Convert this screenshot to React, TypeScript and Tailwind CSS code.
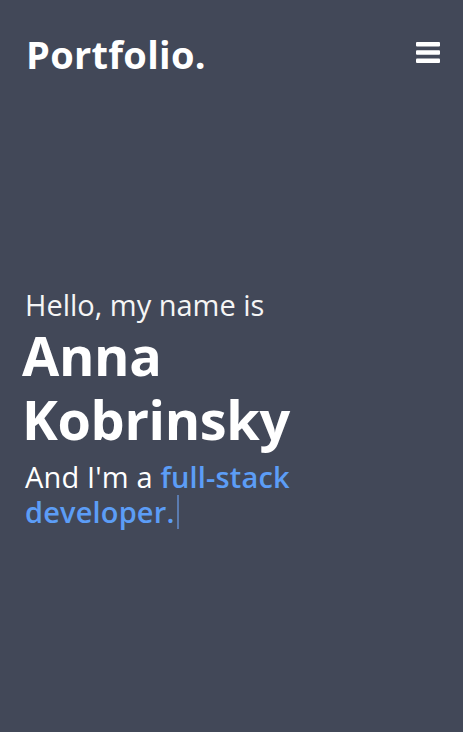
import React from "react";

export default function App() {
  return (
    <div
      className="min-h-[732px] w-full bg-[#424858] text-white"
      style={{ fontFamily: '"Open Sans", "Noto Sans", sans-serif' }}
    >
      <header className="flex items-start justify-between pl-[26px] pr-[23px] pt-[36px]">
        <div className="text-[38px] font-bold leading-[36px] tracking-[0.3px]">Portfolio.</div>
        <button className="mt-[6px]" aria-label="menu">
          <svg width="24" height="21" viewBox="0 0 24 21" fill="#ffffff">
            <rect x="0" y="0" width="24" height="4.5" rx="1" />
            <rect x="0" y="8.2" width="24" height="4.5" rx="1" />
            <rect x="0" y="16.5" width="24" height="4.5" rx="1" />
          </svg>
        </button>
      </header>
      <main className="mt-[215px] pl-[25px] pr-[24px]">
        <p className="text-[29px] leading-[36px] text-[#f5f5f5]">Hello, my name is</p>
        <h1 className="-ml-[3px] text-[54px] font-bold leading-[64px] tracking-[-0.35px]">
          Anna
          <br />
          Kobrinsky
        </h1>
        <p className="mt-[8px] text-[29px] leading-[35px] tracking-[0.15px]">
          And I'm a{" "}
          <span className="font-semibold text-[#5c9df6]">
            full-stack
            <br />
            developer.
          </span>
          <span className="ml-[3px] inline-block h-[34px] w-[2px] align-[-6px] bg-[#5a7bb0]" />
        </p>
      </main>
    </div>
  );
}
